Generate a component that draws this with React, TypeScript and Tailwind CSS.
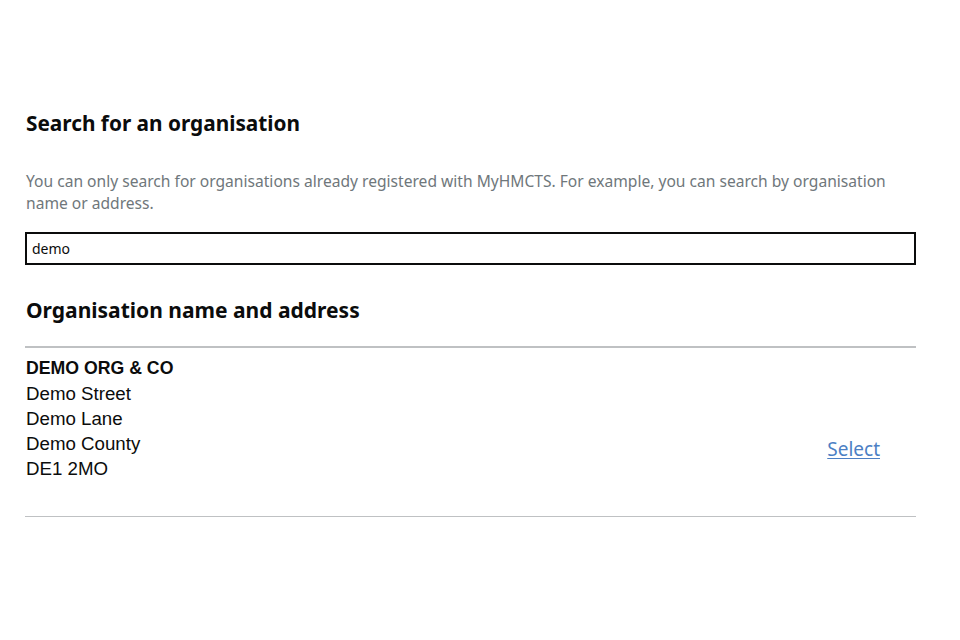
import React from "react"

export default function App() {
  return (
    <div className="w-[960px] h-[640px] bg-white" style={{ fontFamily: "'Noto Sans', sans-serif" }}>
      <div className="pl-[25px] pt-[110px] w-[915px]">
        {/* Search section */}
        <h1 className="pl-[1px] text-[20.8px] leading-[27px] font-bold text-[#0b0c0c]">Search for an organisation</h1>
        <p className="mt-[33px] pl-[1px] max-w-[872px] text-[15.6px] leading-[22px] text-[#6f777b]">
          You can only search for organisations already registered with MyHMCTS. For example, you can search by
          organisation name or address.
        </p>
        <input
          defaultValue="demo"
          className="mt-[18px] block w-[891px] h-[33px] border-2 border-[#0b0c0c] px-[5px] text-[14px] text-[#0b0c0c] outline-none"
        />

        {/* Results */}
        <h2 className="mt-[30px] pl-[1px] text-[21px] leading-[30px] font-bold text-[#0b0c0c]">
          Organisation name and address
        </h2>
        <div className="mt-[21px] w-[891px] border-t-2 border-[#bfc1c3]">
          <div
            className="flex justify-between items-start pt-[8px] pb-[35px] border-b border-[#bfc1c3]"
            style={{ fontFamily: "'Liberation Sans', Arial, sans-serif" }}
          >
            <div className="pl-[1px] text-[#0b0c0c]">
              <div className="text-[17.7px] leading-[25px] font-bold">DEMO ORG &amp; CO</div>
              <div className="text-[18.7px] leading-[25px]">Demo Street</div>
              <div className="text-[18.7px] leading-[25px]">Demo Lane</div>
              <div className="text-[18.7px] leading-[25px]">Demo County</div>
              <div className="text-[18.7px] leading-[25px]">DE1 2MO</div>
            </div>
            <a
              href="#"
              className="mt-[81px] mr-[36px] text-[19px] leading-[24px] text-[#4c7fc4] underline underline-offset-2"
              style={{ fontFamily: "'Noto Sans', sans-serif" }}
            >
              Select
            </a>
          </div>
        </div>
      </div>
    </div>
  )
}
